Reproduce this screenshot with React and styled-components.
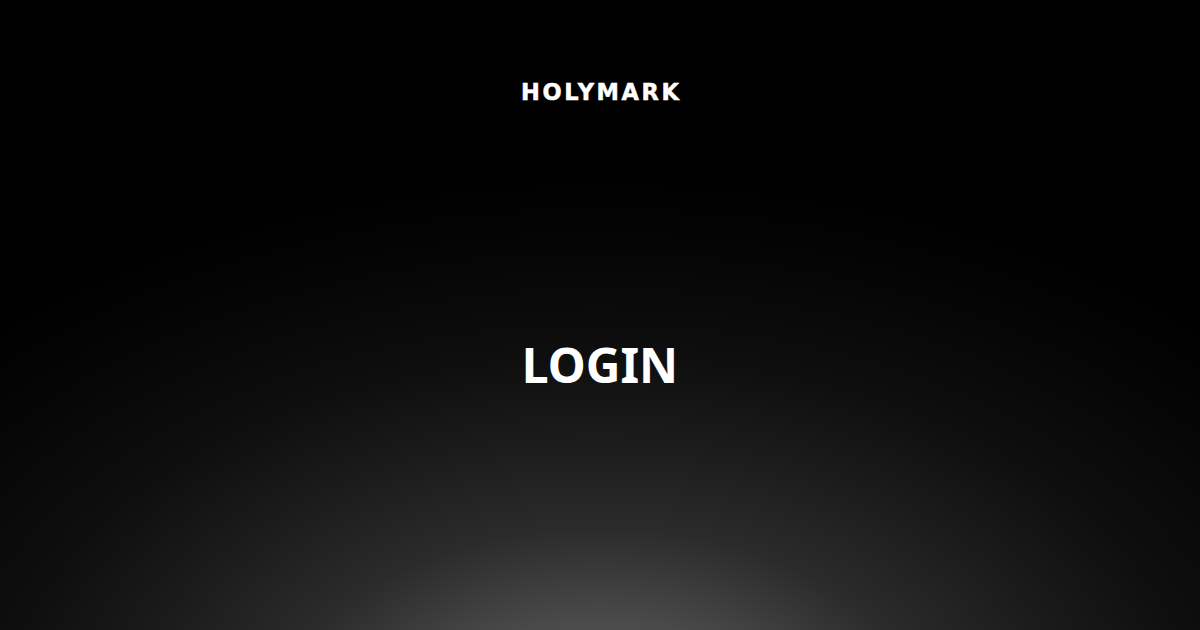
import React from "react";
import styled, { createGlobalStyle } from "styled-components";

const Global = createGlobalStyle`
  html, body { margin: 0; padding: 0; background: #000; }
  #root { width: 1200px; height: 630px; }
`;

const Page = styled.div`
  width: 1200px;
  height: 630px;
  box-sizing: border-box;
  background: radial-gradient(
    ellipse 900px 562px at 50% 730px,
    #5a5a5a 0%,
    #4a4a4a 19.6%,
    #3e3e3e 26%,
    #2b2b2b 36%,
    #1b1b1b 52%,
    #0e0e0e 67%,
    #050505 86%,
    #000 100%
  );
  display: flex;
  flex-direction: column;
  align-items: center;
  padding-top: 79px;
  overflow: hidden;
`;

const Logo = styled.div`
  font-family: "DejaVu Sans", sans-serif;
  font-weight: 700;
  font-size: 22.5px;
  letter-spacing: 2.6px;
  margin-right: -2.6px;
  color: #fff;
  -webkit-text-stroke: 0.5px #fff;
  line-height: 26px;
`;

const Title = styled.h1`
  margin: 0;
  margin-top: 230px;
  font-family: "Noto Sans", sans-serif;
  font-weight: 700;
  font-size: 48px;
  line-height: 60px;
  color: #fff;
`;

export default function App() {
  return (
    <>
      <Global />
      <Page>
        <Logo>HOLYMARK</Logo>
        <Title>LOGIN</Title>
      </Page>
    </>
  );
}
